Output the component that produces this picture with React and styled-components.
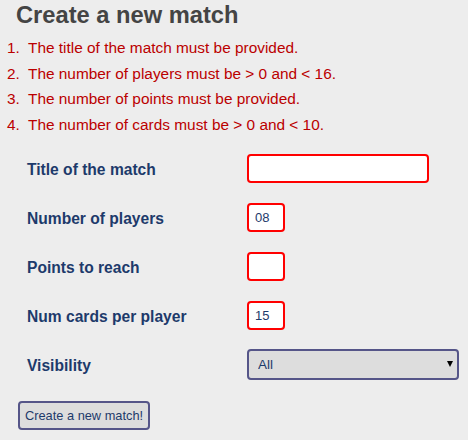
import React from "react";
import styled, { createGlobalStyle } from "styled-components";

const Global = createGlobalStyle`
  html, body { margin: 0; padding: 0; background: #ededed; }
  body { font-family: "Liberation Sans", Arial, sans-serif; }
`;

const Page = styled.div`
  width: 468px;
  height: 440px;
  overflow: hidden;
`;

const Title = styled.h1`
  margin: 0;
  padding: 1px 0 0 16px;
  font-size: 23.7px;
  line-height: 28px;
  font-weight: bold;
  color: #444444;
`;

const Errors = styled.ol`
  list-style: none;
  margin: 6px 0 0;
  padding: 0 0 0 7px;
`;

const ErrorItem = styled.li`
  display: flex;
  font-size: 15.4px;
  line-height: 25.7px;
  color: #bb0000;
`;

const Num = styled.span`
  width: 21px;
  flex: none;
`;

const Form = styled.form`
  margin-top: 6px;
  padding-left: 27px;
`;

const Row = styled.div`
  display: grid;
  grid-template-columns: 220px auto;
  align-items: center;
  height: 49px;
`;

const Label = styled.label`
  padding-top: 4px;
  font-size: 15.6px;
  font-weight: bold;
  color: #1d3a6b;
`;

const Field = styled.input`
  box-sizing: border-box;
  width: ${(p) => p.$w}px;
  height: 29px;
  border: 2px solid #ff0000;
  border-radius: 4px;
  background: #ffffff;
  padding: 0 0 0 6px;
  font-family: "Liberation Sans", Arial, sans-serif;
  font-size: 13px;
  color: #1d3a6b;
  outline: none;
`;

const SelectWrap = styled.div`
  position: relative;
  width: 212px;
  height: 31px;
`;

const Select = styled.select`
  appearance: none;
  -webkit-appearance: none;
  box-sizing: border-box;
  width: 100%;
  height: 100%;
  border: 2px solid #555588;
  border-radius: 4px;
  background-color: #dddddd;
  padding: 0 0 0 9px;
  font-family: "Liberation Sans", Arial, sans-serif;
  font-size: 13.5px;
  color: #1d3a6b;
  outline: none;
`;

const Arrow = styled.span`
  position: absolute;
  right: 6px;
  top: 12px;
  width: 0;
  height: 0;
  border-left: 3px solid transparent;
  border-right: 3px solid transparent;
  border-top: 6px solid #000000;
  pointer-events: none;
`;

const Submit = styled.button`
  box-sizing: border-box;
  margin: 12px 0 0 18px;
  height: 29px;
  padding: 0 5px;
  border: 2px solid #555588;
  border-radius: 4px;
  background: #dddddd;
  font-family: "Liberation Sans", Arial, sans-serif;
  font-size: 12.8px;
  color: #1d3a6b;
`;

const errors = [
  "The title of the match must be provided.",
  "The number of players must be > 0 and < 16.",
  "The number of points must be provided.",
  "The number of cards must be > 0 and < 10.",
];

export default function App() {
  return (
    <Page>
      <Global />
      <Title>Create a new match</Title>
      <Errors>
        {errors.map((e, i) => (
          <ErrorItem key={i}>
            <Num>{i + 1}.</Num>
            <span>{e}</span>
          </ErrorItem>
        ))}
      </Errors>
      <Form onSubmit={(e) => e.preventDefault()}>
        <Row>
          <Label>Title of the match</Label>
          <Field $w={182} defaultValue="" />
        </Row>
        <Row>
          <Label>Number of players</Label>
          <Field $w={38} defaultValue="08" />
        </Row>
        <Row>
          <Label>Points to reach</Label>
          <Field $w={38} defaultValue="" />
        </Row>
        <Row>
          <Label>Num cards per player</Label>
          <Field $w={38} defaultValue="15" />
        </Row>
        <Row>
          <Label>Visibility</Label>
          <SelectWrap>
            <Select defaultValue="All">
              <option>All</option>
              <option>Friends</option>
              <option>Private</option>
            </Select>
            <Arrow />
          </SelectWrap>
        </Row>
      </Form>
      <Submit type="button">Create a new match!</Submit>
    </Page>
  );
}
